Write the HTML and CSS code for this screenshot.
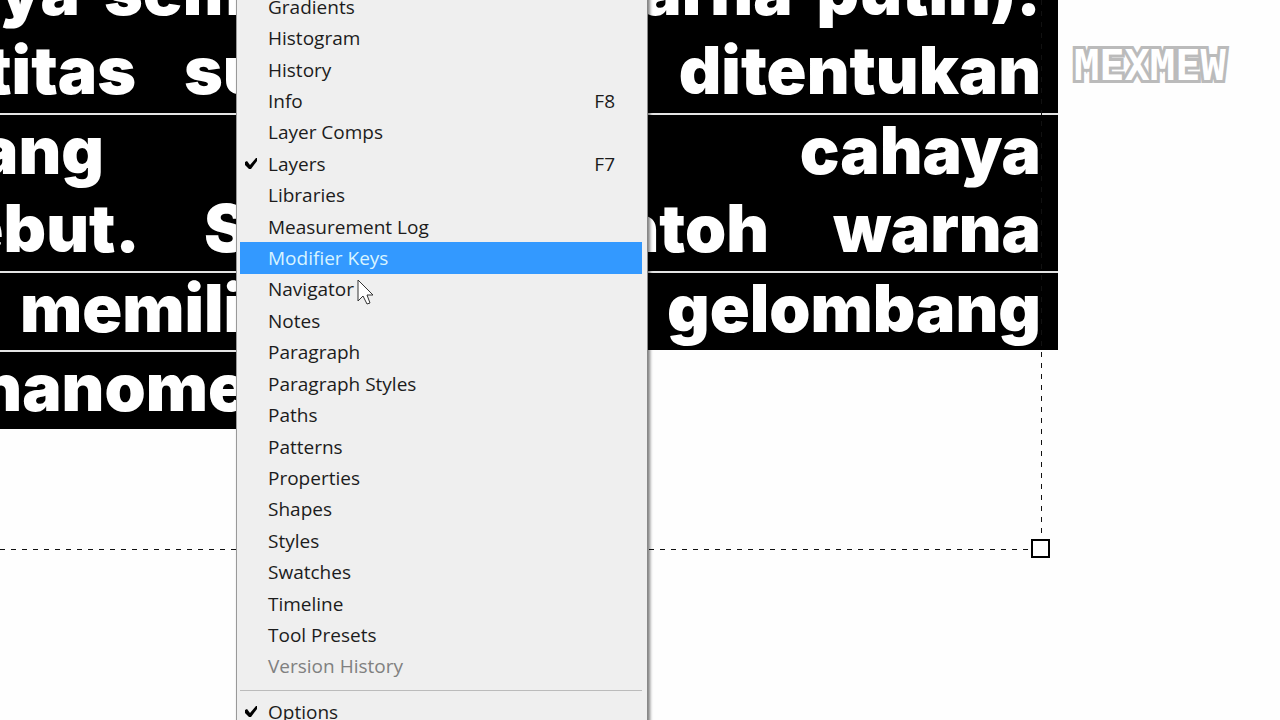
FILE: index.html
```
<!DOCTYPE html>
<html lang="en">
<head>
  <meta charset="UTF-8">
  <meta name="viewport" content="width=device-width, initial-scale=1.0">
  <title>Window menu</title>
  <link rel="stylesheet" href="styles.css">
</head>
<body>
  <main class="canvas">
    <!-- Selected paragraph text -->
    <div class="text-left" lang="id">
      <p class="line"><span class="word w-aya">aya</span><span>sem</span></p>
      <p class="line wide"><span class="word w-titas">titas</span><span>su</span></p>
      <p class="line ruled"><span class="word w-ang">ang</span></p>
      <p class="line extra-wide"><span class="word w-ebut">ebut.</span><span>S</span></p>
      <p class="line ruled indent"><span>memili</span></p>
      <p class="line ruled"><span class="word w-nanome">nanome</span></p>
    </div>
    <div class="text-right" lang="id">
      <p class="line"><span>arna</span><span>putih).</span></p>
      <p class="line"><span>ditentukan</span></p>
      <p class="line ruled"><span>cahaya</span></p>
      <p class="line extra-wide"><span>ntoh</span><span>warna</span></p>
      <p class="line ruled"><span>gelombang</span></p>
    </div>

    <!-- Text frame -->
    <div class="frame"><span class="handle"></span></div>
    <div class="watermark">MEXMEW</div>
  </main>

  <!-- Window menu -->
  <nav class="menu">
    <div class="items">
      <button class="item">Gradients</button>
      <button class="item">Histogram</button>
      <button class="item">History</button>
      <button class="item">Info<kbd>F8</kbd></button>
      <button class="item">Layer Comps</button>
      <button class="item"><svg class="check" viewBox="0 0 14 14"><path d="M1 5 L3 4 L6 8 L12 1 L13 1 V4 L7 12 H5 L1 8 Z"/></svg>Layers<kbd>F7</kbd></button>
      <button class="item">Libraries</button>
      <button class="item">Measurement Log</button>
      <button class="item active">Modifier Keys</button>
      <button class="item">Navigator</button>
      <button class="item">Notes</button>
      <button class="item">Paragraph</button>
      <button class="item">Paragraph Styles</button>
      <button class="item">Paths</button>
      <button class="item">Patterns</button>
      <button class="item">Properties</button>
      <button class="item">Shapes</button>
      <button class="item">Styles</button>
      <button class="item">Swatches</button>
      <button class="item">Timeline</button>
      <button class="item">Tool Presets</button>
      <button class="item" disabled>Version History</button>
    </div>
    <hr>
    <button class="item"><svg class="check" viewBox="0 0 14 14"><path d="M1 5 L3 4 L6 8 L12 1 L13 1 V4 L7 12 H5 L1 8 Z"/></svg>Options</button>
  </nav>

  <svg class="cursor" viewBox="0 0 17 27"><path d="M1 1 V22 L6 17 L10 25 L13 24 L10 16 H16 Z"/></svg>
</body>
</html>
```
FILE: styles.css
```
* {
  box-sizing: border-box;
  margin: 0;
  padding: 0;
}

body {
  position: relative;
  height: 100vh;
  overflow: hidden;
  background: #fefefe;
  font-family: "Open Sans", "Noto Sans", sans-serif;
}

.canvas {
  display: flex;
  align-items: flex-start;
  margin-top: -45px;
  font-family: Inter, "Liberation Sans", sans-serif;
  font-size: 66px;
  font-weight: 900;
  color: #fff;
}

.text-left {
  width: 400px;
  overflow: hidden;
  background: #000;
}

.text-right {
  width: 658px;
  background: #000;
}

.line {
  display: flex;
  gap: 24px;
  height: 79px;
  line-height: 72px;
  white-space: nowrap;
}

.text-right .line {
  justify-content: flex-end;
  padding-right: 17px;
}

.line.wide { gap: 48px; }
.line.extra-wide { gap: 64px; }
.line.indent { padding-left: 20px; }

.line.ruled {
  border-top: 2px solid #e4e4e4;
  line-height: 70px;
}

/* words cut off by the left edge of the window */
.word {
  display: flex;
  justify-content: flex-end;
}

.w-aya { width: 80px; }
.w-titas { width: 136px; }
.w-ang { width: 104px; }
.w-ebut { width: 140px; }
.w-nanome { width: 248px; }

.frame {
  position: absolute;
  top: 0;
  left: 0;
  width: 1042px;
  height: 550px;
  background:
    repeating-linear-gradient(90deg, #111 0 5px, transparent 5px 11px) 0 100% / 100% 1px no-repeat,
    repeating-linear-gradient(#111 0 5px, transparent 5px 11px) 100% 0 / 1px 100% no-repeat;
}

.handle {
  position: absolute;
  right: -8px;
  bottom: -8px;
  width: 19px;
  height: 19px;
  border: 2px solid #000;
  background: #fff;
}

.watermark {
  position: absolute;
  top: 36px;
  left: 1074px;
  font-family: "DejaVu Sans Mono", monospace;
  font-size: 42px;
  font-weight: 700;
  line-height: 60px;
  color: #fff;
  -webkit-text-stroke: 6px #bbb;
  stroke-linejoin: round;
  paint-order: stroke fill;
}

.menu {
  position: absolute;
  top: -9px;
  left: 236px;
  width: 412px;
  height: calc(100vh + 20px);
  padding: 0 5px 0 3px;
  border-left: 1px solid #999;
  border-right: 1px solid #888;
  background: #efefef;
  box-shadow: 2px 0 3px rgba(0, 0, 0, 0.5);
}

.items {
  display: grid;
  grid-auto-rows: 1fr;
  height: 96vh;
}

.item {
  position: relative;
  display: flex;
  align-items: center;
  width: 100%;
  min-height: 0;
  padding: 0 27px 0 28px;
  border: none;
  background: none;
  font-family: inherit;
  font-size: 19px;
  line-height: 30px;
  color: #1c1c1c;
  text-align: left;
}

.item kbd {
  margin-left: auto;
  font-family: inherit;
}

.item.active {
  background: #3399ff;
  color: #d8f4ff;
}

.item:disabled { color: #808080; }

.check {
  position: absolute;
  left: 4px;
  width: 14px;
  height: 14px;
}

hr {
  margin: 8px 0 6px;
  border: none;
  border-top: 1px solid #bbb;
}

.cursor {
  position: absolute;
  top: 279px;
  left: 357px;
  width: 17px;
  height: 27px;
  fill: #fff;
  stroke: #333;
}
```
